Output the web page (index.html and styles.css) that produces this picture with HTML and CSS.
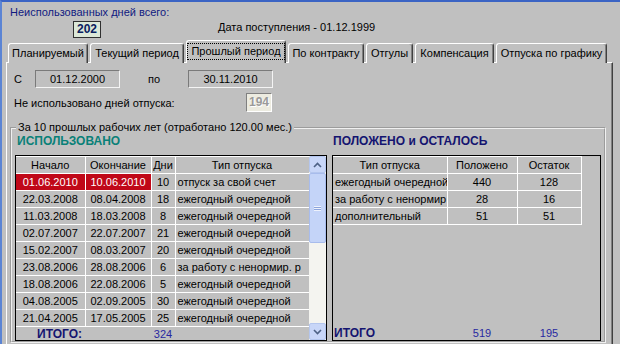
FILE: index.html
```html
<!DOCTYPE html>
<html lang="ru">
<head>
    <meta charset="UTF-8">
    <title>Отпуска сотрудника</title>
    <link rel="stylesheet" href="styles.css">
</head>
<body>

<div class="window">
    <div class="summary">
        <div class="summary-label">Неиспользованных дней всего:</div>
        <div class="summary-row">
            <span class="total-box">202</span>
            <span class="hire-date">Дата поступления - 01.12.1999</span>
        </div>
    </div>

    <div class="tabs">
        <div class="tab tab-plan">Планируемый</div>
        <div class="tab tab-current">Текущий период</div>
        <div class="tab tab-past active"><span class="focus">Прошлый период</span></div>
        <div class="tab tab-contract">По контракту</div>
        <div class="tab tab-off">Отгулы</div>
        <div class="tab tab-comp">Компенсация</div>
        <div class="tab tab-schedule">Отпуска по графику</div>
    </div>

    <div class="panel">
        <div class="period-row">
            <span class="label-from">С</span>
            <span class="date-box">01.12.2000</span>
            <span class="label-to">по</span>
            <span class="date-box">30.11.2010</span>
        </div>
        <div class="unused-row">
            <span class="unused-label">Не использовано дней отпуска:</span>
            <span class="unused-box">194</span>
        </div>

        <fieldset class="group">
            <legend>За 10 прошлых рабочих лет (отработано 120.00 мес.)</legend>
            <div class="columns">
                <div class="used">
                    <div class="title title-used">ИСПОЛЬЗОВАНО</div>
                    <div class="grid">
                        <div class="grid-body">
                            <table class="used-table">
                                <colgroup>
                                    <col class="c-start"><col class="c-end"><col class="c-days"><col class="c-type">
                                </colgroup>
                                <thead>
                                    <tr><th>Начало</th><th>Окончание</th><th>Дни</th><th>Тип отпуска</th></tr>
                                </thead>
                                <tbody>
                                    <tr><td class="selected">01.06.2010</td><td class="selected">10.06.2010</td><td>10</td><td class="text">отпуск за свой счет</td></tr>
                                    <tr><td>22.03.2008</td><td>08.04.2008</td><td>18</td><td class="text">ежегодный очередной</td></tr>
                                    <tr><td>11.03.2008</td><td>18.03.2008</td><td>8</td><td class="text">ежегодный очередной</td></tr>
                                    <tr><td>02.07.2007</td><td>22.07.2007</td><td>21</td><td class="text">ежегодный очередной</td></tr>
                                    <tr><td>15.02.2007</td><td>08.03.2007</td><td>20</td><td class="text">ежегодный очередной</td></tr>
                                    <tr><td>23.08.2006</td><td>28.08.2006</td><td>6</td><td class="text">за работу с ненормир. р</td></tr>
                                    <tr><td>18.08.2006</td><td>22.08.2006</td><td>5</td><td class="text">ежегодный очередной</td></tr>
                                    <tr><td>04.08.2005</td><td>02.09.2005</td><td>30</td><td class="text">ежегодный очередной</td></tr>
                                    <tr><td>21.04.2005</td><td>17.05.2005</td><td>25</td><td class="text">ежегодный очередной</td></tr>
                                </tbody>
                                <tfoot>
                                    <tr><td colspan="2" class="total-label">ИТОГО:</td><td class="total-num">324</td><td></td></tr>
                                </tfoot>
                            </table>
                        </div>
                        <div class="scrollbar">
                            <div class="sb-button">
                                <svg width="9" height="6" viewBox="0 0 9 6"><polyline points="1,5 4.5,1.5 8,5" fill="none" stroke="#4d6185" stroke-width="1.6"/></svg>
                            </div>
                            <div class="sb-thumb"><span class="grip"></span></div>
                            <div class="sb-track"></div>
                            <div class="sb-button">
                                <svg width="9" height="6" viewBox="0 0 9 6"><polyline points="1,1 4.5,4.5 8,1" fill="none" stroke="#4d6185" stroke-width="1.6"/></svg>
                            </div>
                        </div>
                    </div>
                </div>

                <div class="rest">
                    <div class="title title-rest">ПОЛОЖЕНО и ОСТАЛОСЬ</div>
                    <div class="grid grid-rest">
                        <table class="rest-table">
                            <colgroup>
                                <col class="c-kind"><col class="c-due"><col class="c-left">
                            </colgroup>
                            <thead>
                                <tr><th>Тип отпуска</th><th>Положено</th><th>Остаток</th></tr>
                            </thead>
                            <tbody>
                                <tr><td class="text">ежегодный очередной</td><td>440</td><td>128</td></tr>
                                <tr><td class="text">за работу с ненормир</td><td>28</td><td>16</td></tr>
                                <tr><td class="text">дополнительный</td><td>51</td><td>51</td></tr>
                            </tbody>
                        </table>
                        <div class="rest-total">
                            <span class="total-label">ИТОГО</span>
                            <span class="total-num">519</span>
                            <span class="total-num">195</span>
                        </div>
                    </div>
                </div>
            </div>
        </fieldset>
    </div>
</div>

</body>
</html>
```

FILE: styles.css
```css
body {
    margin: 0;
    background: #c0c0c0;
    font-family: "Liberation Sans", Arial, sans-serif;
    font-size: 11px;
    color: #000;
    overflow: hidden;
}
.window {
    height: 342px;
    border-top: 2px solid #3b64c4;
    border-left: 2px solid #5b84d4;
    overflow: hidden;
}
.summary {
    padding: 4px 0 0 8px;
}
.summary-label {
    color: #101a80;
    line-height: 13px;
}
.summary-row {
    display: flex;
    align-items: flex-start;
    margin-top: 2px;
}
.total-box {
    margin-left: 63px;
    width: 28px;
    height: 17px;
    box-sizing: border-box;
    border: 1px solid #303030;
    background: #dce8d8;
    color: #0a2060;
    font-weight: bold;
    font-size: 12px;
    line-height: 15px;
    text-align: center;
}
.hire-date {
    margin-left: 117px;
    line-height: 13px;
}
.tabs {
    display: flex;
    align-items: flex-end;
    gap: 2px;
    margin: 2px 0 -1px 6px;
    position: relative;
    z-index: 1;
}
.tab {
    height: 20px;
    box-sizing: border-box;
    line-height: 18px;
    border: 1px solid #fff;
    border-right-color: #404040;
    border-bottom: none;
    border-radius: 3px 3px 0 0;
    box-shadow: inset -1px 0 #808080;
    background: #c0c0c0;
    white-space: nowrap;
    text-align: center;
}
.tab-plan { width: 80px; }
.tab-current { width: 94px; }
.tab-past { width: 100px; }
.tab-contract { width: 76px; }
.tab-off { width: 47px; }
.tab-comp { width: 79px; }
.tab-schedule { width: 111px; }
.tab.active {
    height: 23px;
    padding-top: 2px;
    line-height: 17px;
}
.focus {
    display: inline-block;
    padding: 0 3px;
    border: 1px dotted #000;
    line-height: 15px;
}
.panel {
    margin-left: 4px;
    width: 607px;
    height: 300px;
    box-sizing: border-box;
    padding: 7px 6px 0 3px;
    border-top: 1px solid #fff;
    border-left: 1px solid #fff;
    border-right: 1px solid #404040;
    box-shadow: inset -1px 0 #808080;
}
.period-row {
    display: flex;
    align-items: center;
    height: 18px;
    margin-left: 4px;
}
.label-from {
    width: 21px;
}
.label-to {
    margin-left: 28px;
    width: 40px;
}
.date-box {
    width: 85px;
    height: 18px;
    box-sizing: border-box;
    border: 1px solid;
    border-color: #7a7a7a #f4f4f4 #f4f4f4 #7a7a7a;
    text-align: center;
    line-height: 16px;
}
.unused-row {
    display: flex;
    align-items: center;
    height: 19px;
    margin: 5px 0 0 4px;
}
.unused-label {
    width: 232px;
}
.unused-box {
    width: 26px;
    height: 19px;
    box-sizing: border-box;
    border: 1px solid;
    border-color: #808080 #fff #fff #808080;
    background: #ecebe0;
    color: #9a9a9a;
    font-weight: bold;
    font-size: 12px;
    text-align: center;
    line-height: 17px;
    text-shadow: 1px 1px #fff;
}
.group {
    margin: 9px 0 0;
    padding: 0 3px;
    border: 2px groove #f0f0f0;
    min-width: 0;
}
.group legend {
    padding: 0 2px;
    margin-left: 1px;
    line-height: 13px;
}
.columns {
    display: flex;
    gap: 5px;
}
.title {
    font-size: 12px;
    font-weight: bold;
    line-height: 14px;
    margin-bottom: 7px;
}
.title-used {
    color: #0a8078;
    padding-left: 2px;
}
.title-rest {
    color: #141470;
    padding-left: 1px;
}
.grid {
    height: 186px;
    box-sizing: border-box;
    border: 1px solid #000;
    display: flex;
}
.used .grid {
    width: 312px;
}
.grid-body {
    flex: 1;
    overflow: hidden;
}
table {
    border-collapse: collapse;
    table-layout: fixed;
}
.used-table {
    width: 293px;
}
.c-start { width: 69px; }
.c-end { width: 66px; }
.c-days { width: 24px; }
.c-type { width: 134px; }
th, td {
    height: 16px;
    padding: 0;
    border-right: 1px solid #fff;
    border-bottom: 1px solid #fff;
    font-weight: normal;
    text-align: center;
    white-space: nowrap;
    overflow: hidden;
    line-height: 16px;
}
thead th {
    border-top: 1px solid #fff;
    height: 15px;
}
td.text {
    text-align: left;
    padding-left: 2px;
}
td.selected {
    background: #c00818;
    color: #fff;
}
tfoot td {
    border: none;
    height: 14px;
    line-height: 14px;
}
.total-label {
    color: #141470;
    font-weight: bold;
    font-size: 12px;
    text-align: left;
}
.used-table .total-label {
    padding-left: 21px;
}
.total-num {
    color: #2828a0;
}
.scrollbar {
    width: 17px;
    display: flex;
    flex-direction: column;
    background: #f4f4f0;
}
.sb-button {
    height: 17px;
    box-sizing: border-box;
    border: 1px solid #b4c6ee;
    border-radius: 2px;
    background: #c8d6f8;
    display: flex;
    align-items: center;
    justify-content: center;
}
.sb-thumb {
    height: 70px;
    box-sizing: border-box;
    border: 1px solid #a8bcec;
    border-radius: 2px;
    background: #c4d4f8;
    display: flex;
    align-items: center;
    justify-content: center;
}
.grip {
    width: 7px;
    height: 5px;
    background: repeating-linear-gradient(#eef2fc 0 1px, #8ca4dc 1px 2px);
}
.sb-track {
    flex: 1;
}
.rest {
    width: 269px;
}
.grid-rest {
    flex-direction: column;
}
.rest-table {
    width: 248px;
}
.c-kind { width: 114px; }
.c-due { width: 70px; }
.c-left { width: 64px; }
.rest-total {
    margin-top: auto;
    display: grid;
    grid-template-columns: 114px 70px 64px;
    height: 14px;
    line-height: 14px;
    text-align: center;
}
.rest-total .total-label {
    padding-left: 1px;
}
```
